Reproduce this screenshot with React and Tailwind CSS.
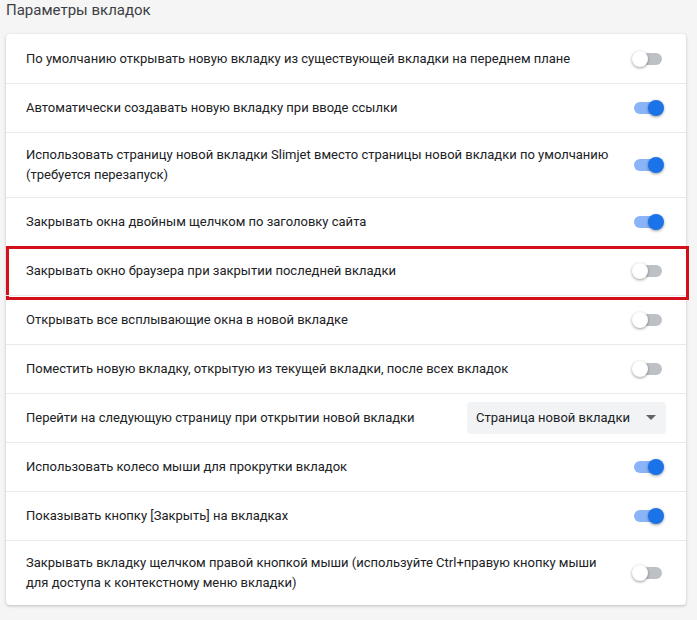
import React from 'react';

const rows = [
  { text: 'По умолчанию открывать новую вкладку из существующей вкладки на переднем плане', on: false },
  { text: 'Автоматически создавать новую вкладку при вводе ссылки', on: true },
  { text: 'Использовать страницу новой вкладки Slimjet вместо страницы новой вкладки по умолчанию (требуется перезапуск)', on: true, tall: true },
  { text: 'Закрывать окна двойным щелчком по заголовку сайта', on: true },
  { text: 'Закрывать окно браузера при закрытии последней вкладки', on: false, marked: true },
  { text: 'Открывать все всплывающие окна в новой вкладке', on: false },
  { text: 'Поместить новую вкладку, открытую из текущей вкладки, после всех вкладок', on: false },
  { text: 'Перейти на следующую страницу при открытии новой вкладки', select: 'Страница новой вкладки' },
  { text: 'Использовать колесо мыши для прокрутки вкладок', on: true },
  { text: 'Показывать кнопку [Закрыть] на вкладках', on: true },
  { text: 'Закрывать вкладку щелчком правой кнопкой мыши (используйте Ctrl+правую кнопку мыши для доступа к контекстному меню вкладки)', on: false, tall: true },
];

function Toggle({ on }) {
  return (
    <div className="relative w-[32px] h-[16px] flex items-center">
      <div className={`ml-[2px] w-[28px] h-[12px] rounded-full ${on ? 'bg-[#8ab4f8]' : 'bg-[#bdc1c6]'}`} />
      <div
        className={`absolute top-0 w-[16px] h-[16px] rounded-full shadow-[0_1px_3px_rgba(0,0,0,0.4)] ${
          on ? 'left-[16px] bg-[#1a73e8]' : 'left-0 bg-white'
        }`}
      />
    </div>
  );
}

export default function App() {
  return (
    <div className="min-h-[620px] bg-[#f5f5f5] pl-[6px] pr-[11px] font-['Roboto','Liberation_Sans',sans-serif] text-[#202124]">
      <div className="h-[20px] leading-[20px] text-[15px] text-[#3c4043] mb-[14px]">Параметры вкладок</div>

      <div className="bg-white rounded-[4px] shadow-[0_1px_3px_rgba(60,64,67,0.3)]">
        {rows.map((r, i) => (
          <div
            key={i}
            className={`relative flex items-center justify-between pl-[20px] pr-[22px] ${
              i > 0 ? 'border-t border-[#e8eaed]' : ''
            } ${r.tall ? 'h-[65px]' : 'h-[49px]'} ${i === 0 ? 'h-[48px]' : ''}`}
          >
            <div className="text-[13px] leading-[20px] pr-[14px]">{r.text}</div>
            {r.select ? (
              <div className="mr-[-2px] flex items-center justify-between w-[199px] h-[32px] bg-[#f1f3f4] rounded-[4px] pl-[9px] pr-[10px] text-[13px] text-[#202124]">
                <span>{r.select}</span>
                <svg width="10" height="6" viewBox="0 0 10 6">
                  <path d="M0 0 L10 0 L5 5 Z" fill="#5f6368" />
                </svg>
              </div>
            ) : (
              <div className="shrink-0">
                <Toggle on={r.on} />
              </div>
            )}
            {r.marked && (
              <div className="absolute left-0 -right-[3px] -top-[1px] -bottom-[5px] border-[3px] border-[#d20f1a] pointer-events-none" />
            )}
          </div>
        ))}
      </div>
    </div>
  );
}
